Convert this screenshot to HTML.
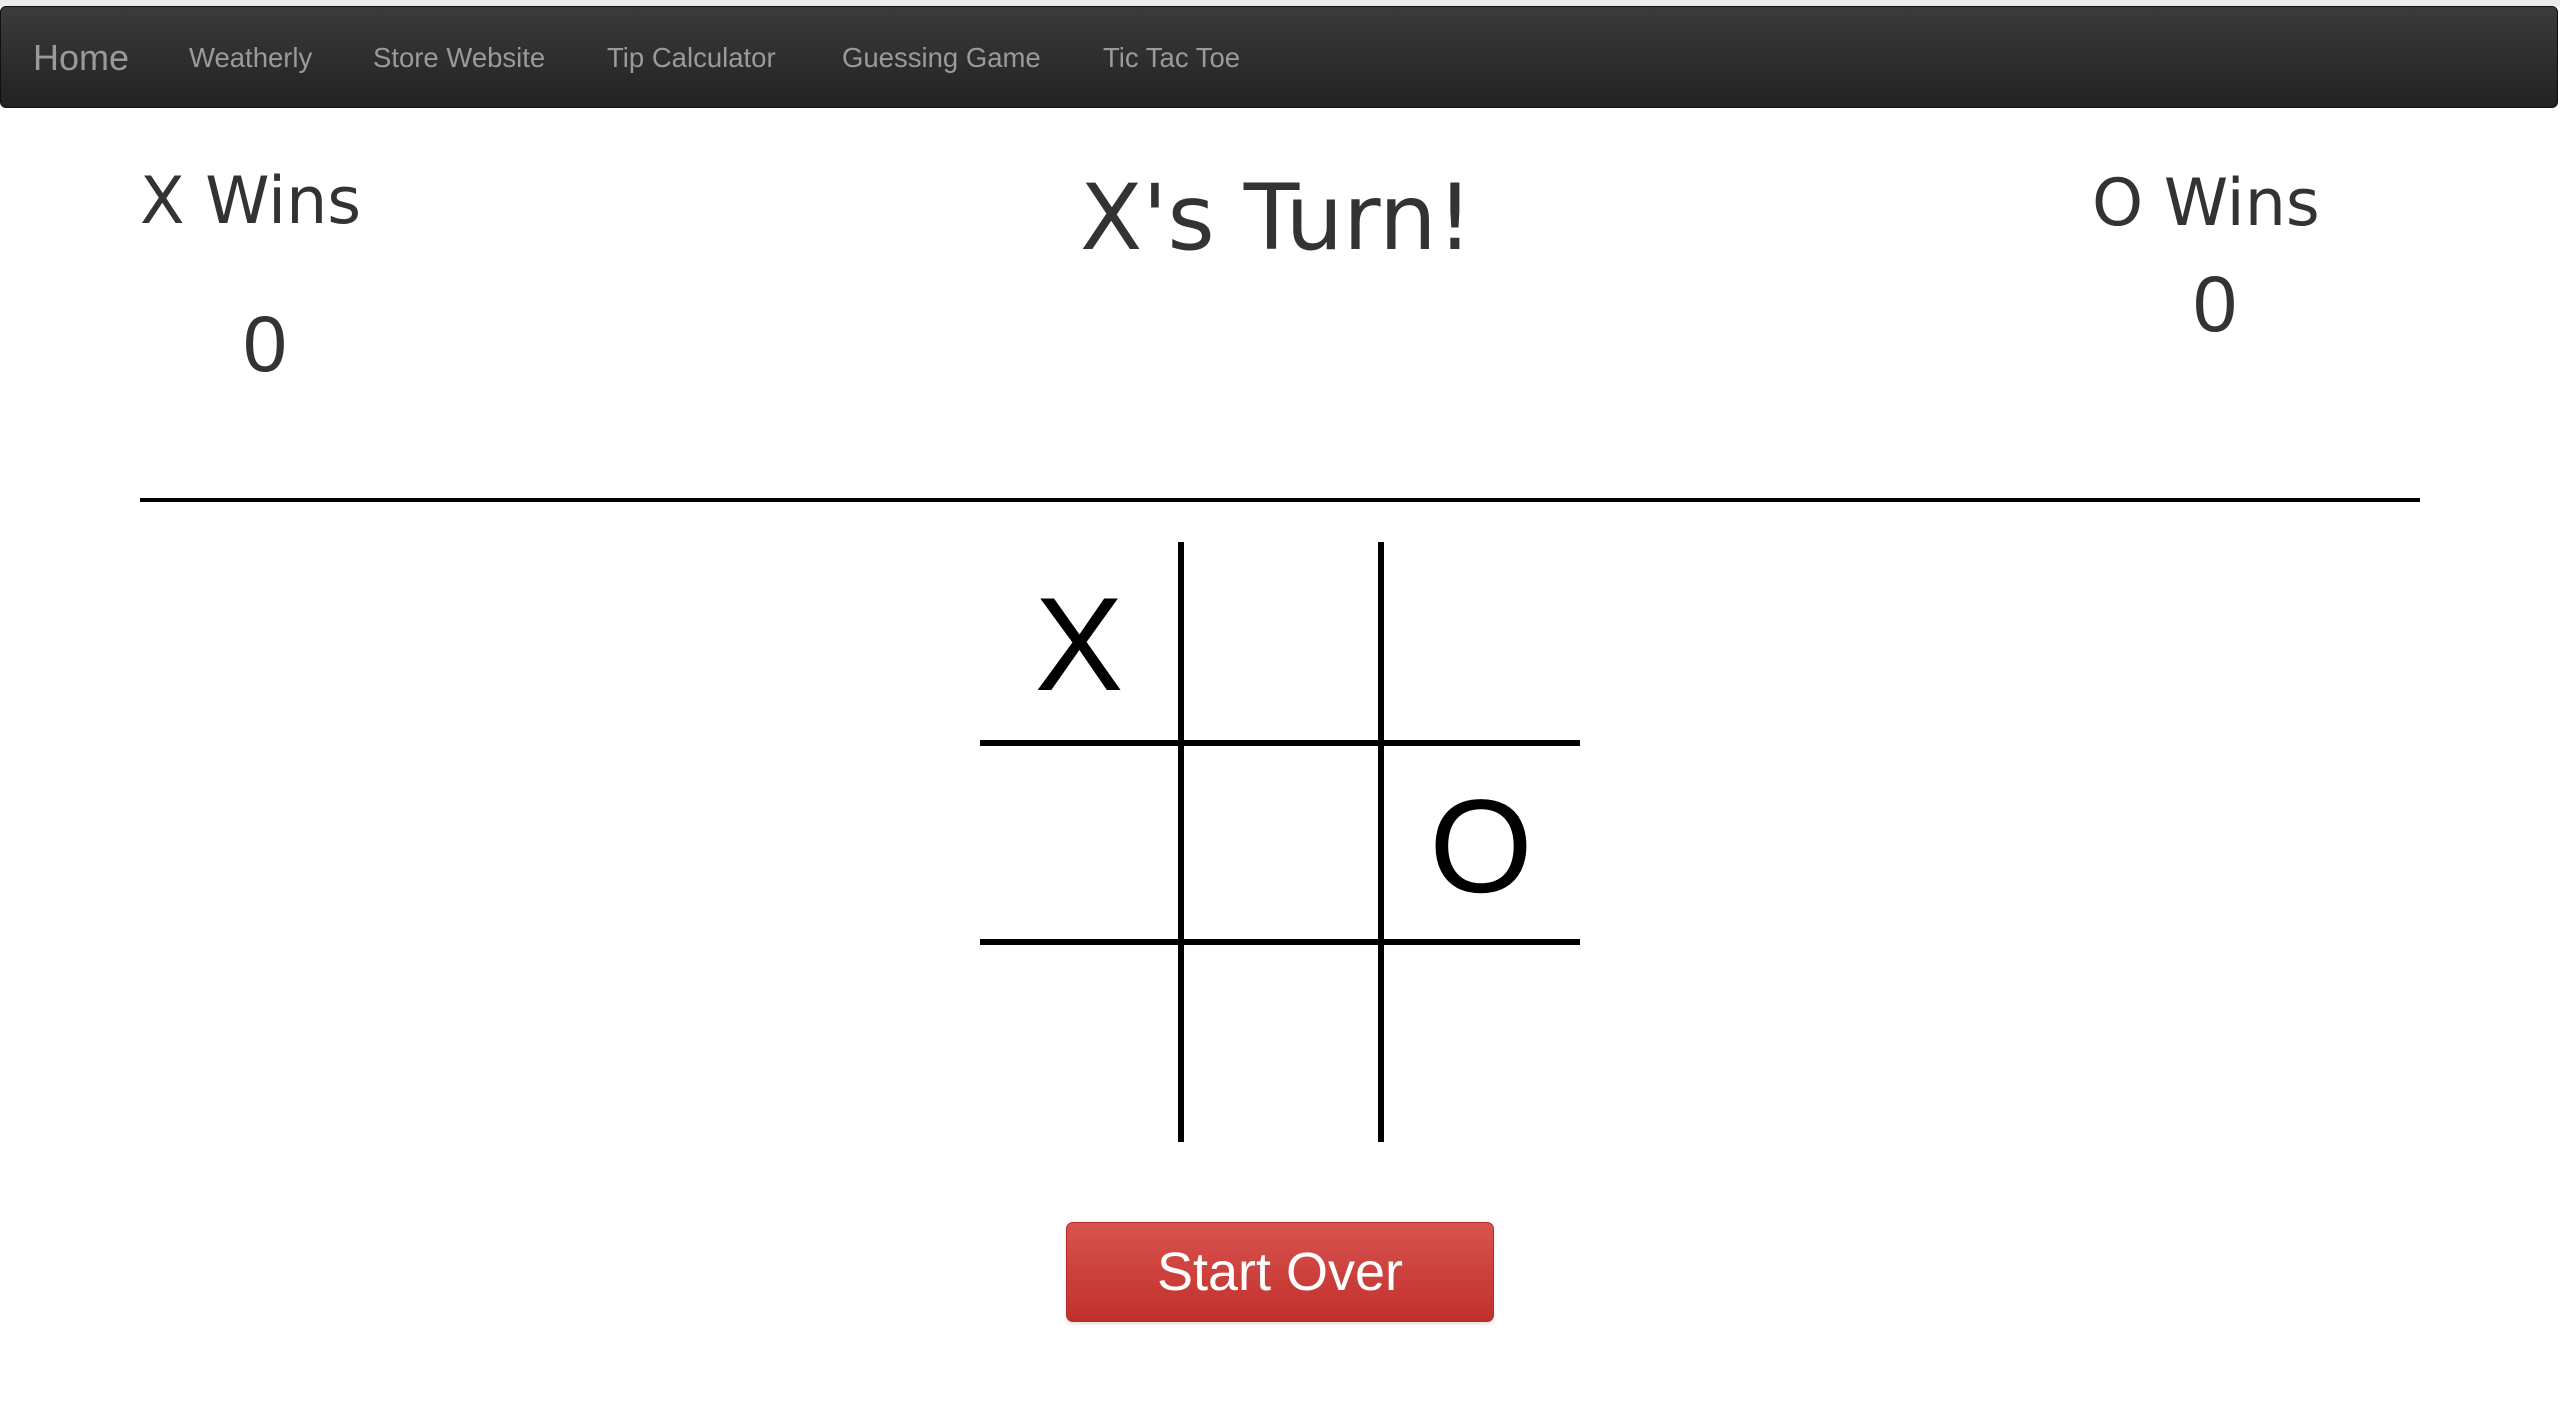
<!DOCTYPE html>
<html><head><meta charset="utf-8"><style>
html,body{margin:0;padding:0;width:2560px;height:1412px;background:#fff;overflow:hidden;position:relative}
.top{position:absolute;left:0;top:0;width:2560px;height:7px;background:#ececec}
.nav{position:absolute;left:0;top:6px;width:2558px;height:102px;border:1px solid #111;border-radius:6px;background:linear-gradient(#3b3b3b,#222);box-sizing:border-box}
.nav span{position:absolute;top:0;height:102px;line-height:102px;color:#9a9a9a;font-family:"Liberation Sans",sans-serif;font-size:27.5px;white-space:nowrap}
.nav span.h{font-size:36px}
.c{position:absolute;font-family:"Comic Sans MS","DejaVu Sans",sans-serif;color:#333;line-height:1;white-space:nowrap}
.d{position:absolute;font-family:"Liberation Sans",sans-serif;color:#333;line-height:1;font-size:79px}
.rule{position:absolute;left:140px;top:498px;width:2280px;height:4px;background:#000}
.v{position:absolute;top:542px;width:6px;height:600px;background:#000}
.hz{position:absolute;left:980px;width:600px;height:6px;background:#000}
.m{position:absolute;font-family:"Liberation Sans",sans-serif;font-size:133px;line-height:1;color:#000;width:200px;text-align:center}
.btn{position:absolute;left:1066px;top:1222px;width:428px;height:100px;box-sizing:border-box;border:1px solid #b52b27;border-radius:7px;background:linear-gradient(#d9534f,#c0302b);box-shadow:0 2px 3px rgba(0,0,0,.12);color:#fff;font-family:"Liberation Sans",sans-serif;font-size:54px;display:flex;align-items:center;justify-content:center}
</style></head><body>
<div class="top"></div>
<div class="nav">
<span class="h" style="left:32px">Home</span>
<span style="left:188px">Weatherly</span>
<span style="left:372px">Store Website</span>
<span style="left:606px">Tip Calculator</span>
<span style="left:841px">Guessing Game</span>
<span style="left:1102px">Tic Tac Toe</span>
</div>
<div class="c" style="left:140px;top:169px;font-size:65px">X Wins</div>
<div class="c" style="left:1080px;top:173px;font-size:91px">X's Turn!</div>
<div class="c" style="left:2092px;top:171px;font-size:65px">O Wins</div>
<div class="d" style="left:243px;top:304px">0</div>
<div class="d" style="left:2193px;top:264px">0</div>
<div class="rule"></div>
<div class="v" style="left:1178px"></div>
<div class="v" style="left:1378px"></div>
<div class="hz" style="top:740px"></div>
<div class="hz" style="top:939px"></div>
<div class="m" style="left:979px;top:579px">X</div>
<div class="m" style="left:1381px;top:781px">O</div>
<div class="btn">Start Over</div>
</body></html>
